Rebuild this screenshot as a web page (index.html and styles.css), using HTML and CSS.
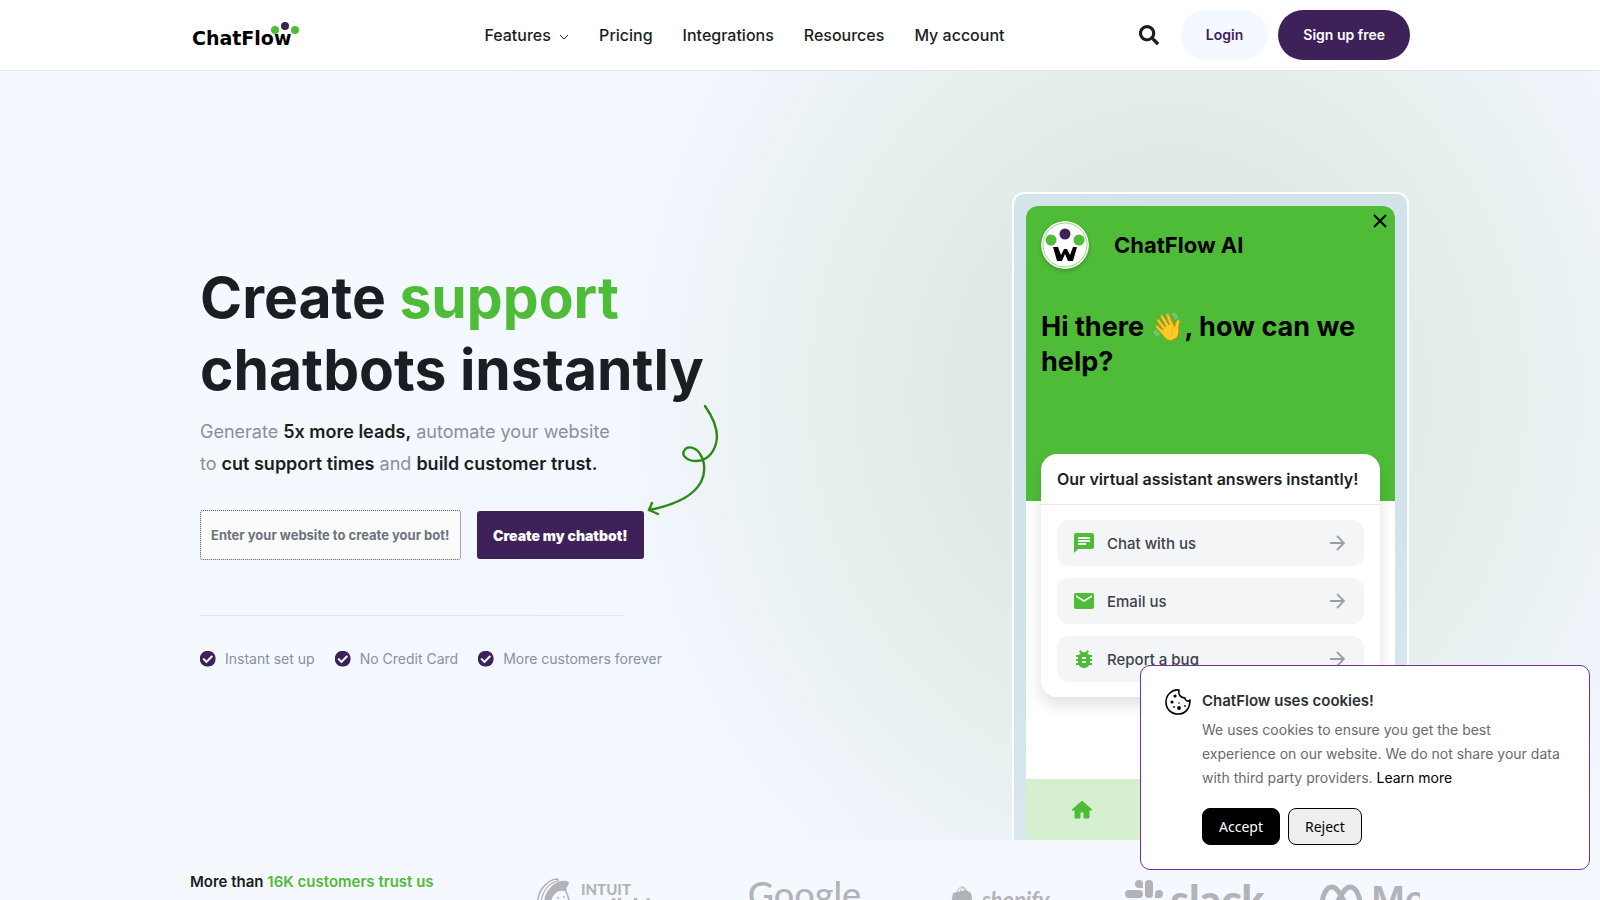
FILE: index.html
```
<!DOCTYPE html>
<html lang="en">
<head>
    <meta charset="UTF-8">
    <meta name="viewport" content="width=device-width, initial-scale=1.0">
    <title>ChatFlow - Create support chatbots instantly</title>
    <link rel="stylesheet" href="styles.css">
</head>
<body>
    <header class="site-header">
        <div class="container header-inner">
            <a href="#" class="logo" aria-label="ChatFlow">
                <svg width="108" height="28" viewBox="0 0 108 28">
                    <text x="0" y="24" class="logo-text">ChatFlow</text>
                    <circle cx="83" cy="9" r="4" fill="#4fbc37"/>
                    <circle cx="93" cy="5" r="4" fill="#3f2159"/>
                    <circle cx="103" cy="9" r="4" fill="#4fbc37"/>
                </svg>
            </a>
            <nav class="main-nav">
                <a href="#">Features
                    <svg width="10" height="6" viewBox="0 0 10 6"><path d="M1 1l4 4 4-4" fill="none" stroke="#1a1e22" stroke-width="1"/></svg>
                </a>
                <a href="#">Pricing</a>
                <a href="#">Integrations</a>
                <a href="#">Resources</a>
                <a href="#">My account</a>
            </nav>
            <div class="header-actions">
                <button type="button" class="search-btn" aria-label="Search">
                    <svg width="20" height="20" viewBox="0 0 512 512"><path fill="#1a1e22" d="M505 442.7L405.3 343c-4.5-4.5-10.6-7-17-7H372c27.6-35.3 44-79.7 44-128C416 93.1 322.9 0 208 0S0 93.1 0 208s93.1 208 208 208c48.3 0 92.7-16.4 128-44v16.3c0 6.4 2.5 12.5 7 17l99.7 99.7c9.4 9.4 24.6 9.4 33.9 0l28.3-28.3c9.4-9.4 9.4-24.6.1-34zM208 336c-70.7 0-128-57.2-128-128 0-70.7 57.2-128 128-128 70.7 0 128 57.2 128 128 0 70.7-57.2 128-128 128z"/></svg>
                </button>
                <a href="#" class="pill pill-light">Login</a>
                <a href="#" class="pill pill-dark">Sign up free</a>
            </div>
        </div>
    </header>

    <main>
        <section class="hero">
            <div class="container hero-inner">
                <div class="hero-copy">
                    <h1>Create <span class="highlight">support</span><br>chatbots instantly</h1>
                    <p class="lead">Generate <strong>5x more leads,</strong> automate your website<br>to <strong>cut support times</strong> and <strong>build customer trust.</strong></p>
                    <form class="bot-form">
                        <input type="text" name="website" placeholder="Enter your website to create your bot!" aria-label="Enter your website to create your bot!">
                        <button type="submit">Create my chatbot!</button>
                        <svg class="arrow" width="76" height="116" viewBox="0 0 76 116" fill="none" stroke="#2c8a14" stroke-width="2.4" stroke-linecap="round" stroke-linejoin="round">
                            <path d="M60 4C67 14 72 24 72 35C71 49 63 59 51 59C43 59 36 54 39 49C42 43 51 45 55 52C61 61 60 72 56 80C48 95 30 103 4 108"/>
                            <path d="M7 101L4 108L13 112"/>
                        </svg>
                    </form>
                    <hr>
                    <ul class="perks">
                        <li><svg width="16" height="16" viewBox="8 8 496 496"><use href="#check"/></svg>Instant set up</li>
                        <li><svg width="16" height="16" viewBox="8 8 496 496"><use href="#check"/></svg>No Credit Card</li>
                        <li><svg width="16" height="16" viewBox="8 8 496 496"><use href="#check"/></svg>More customers forever</li>
                    </ul>
                </div>

                <div class="phone">
                    <div class="widget">
                        <div class="widget-top">
                            <button type="button" class="widget-close" aria-label="Close">
                                <svg width="14" height="14" viewBox="0 0 14 14"><path d="M1 1l12 12M13 1L1 13" stroke="#000" stroke-width="2"/></svg>
                            </button>
                            <div class="widget-brand">
                                <svg class="avatar" width="48" height="48" viewBox="0 0 48 48">
                                    <circle cx="24" cy="24" r="24" fill="#fff"/>
                                    <circle cx="24" cy="24" r="22" fill="none" stroke="#4fbc37" stroke-width="0.6"/>
                                    <circle cx="24" cy="13" r="5.5" fill="#3f2159"/>
                                    <circle cx="10" cy="19" r="5.5" fill="#4fbc37"/>
                                    <circle cx="38" cy="19" r="5.5" fill="#4fbc37"/>
                                    <path d="M12 26H17L20 34L23 28H26L29 34L32 26H36L32 40H27L24 33L21 40H16Z" fill="#000"/>
                                </svg>
                                <span>ChatFlow AI</span>
                            </div>
                            <p class="greeting">Hi there 👋, how can we help?</p>
                        </div>
                        <div class="card">
                            <div class="card-title">Our virtual assistant answers instantly!</div>
                            <div class="card-options">
                                <a href="#" class="option">
                                    <svg width="24" height="24" viewBox="0 0 24 24"><path fill="#4fbc37" d="M20 2H4c-1.1 0-1.99.9-1.99 2L2 22l4-4h14c1.1 0 2-.9 2-2V4c0-1.1-.9-2-2-2zM6 9h12v2H6V9zm8 5H6v-2h8v2zm4-6H6V6h12v2z"/></svg>
                                    <span>Chat with us</span>
                                    <svg width="16" height="16" viewBox="0 0 16 16"><use href="#arrow-right"/></svg>
                                </a>
                                <a href="#" class="option">
                                    <svg width="24" height="24" viewBox="0 0 24 24"><path fill="#4fbc37" d="M20 4H4c-1.1 0-1.99.9-1.99 2L2 18c0 1.1.9 2 2 2h16c1.1 0 2-.9 2-2V6c0-1.1-.9-2-2-2zm0 4l-8 5-8-5V6l8 5 8-5v2z"/></svg>
                                    <span>Email us</span>
                                    <svg width="16" height="16" viewBox="0 0 16 16"><use href="#arrow-right"/></svg>
                                </a>
                                <a href="#" class="option">
                                    <svg width="24" height="24" viewBox="0 0 24 24"><path fill="#4fbc37" d="M20 8h-2.81c-.45-.78-1.07-1.45-1.82-1.96L17 4.41 15.59 3l-2.17 2.17C12.96 5.06 12.49 5 12 5s-.96.06-1.41.17L8.41 3 7 4.41l1.62 1.63C7.88 6.55 7.26 7.22 6.81 8H4v2h2.09c-.05.33-.09.66-.09 1v1H4v2h2v1c0 .34.04.67.09 1H4v2h2.81c1.04 1.79 2.97 3 5.19 3s4.15-1.21 5.19-3H20v-2h-2.09c.05-.33.09-.66.09-1v-1h2v-2h-2v-1c0-.34-.04-.67-.09-1H20V8zm-6 8h-4v-2h4v2zm0-4h-4v-2h4v2z"/></svg>
                                    <span>Report a bug</span>
                                    <svg width="16" height="16" viewBox="0 0 16 16"><use href="#arrow-right"/></svg>
                                </a>
                            </div>
                        </div>
                        <div class="widget-nav">
                            <svg width="24" height="24" viewBox="0 0 24 24"><path fill="#4fbc37" stroke="#4fbc37" stroke-linejoin="round" d="M10 20v-6h4v6h5v-8h3L12 3 2 12h3v8z"/></svg>
                        </div>
                    </div>
                </div>
            </div>
        </section>

        <section class="container trust">
            <h2>More than <span>16K customers trust us</span></h2>
            <div class="brands">
                <div class="brand mailchimp">
                    <svg width="36" height="42" viewBox="0 0 36 42" fill="#b1b3b8">
                        <path d="M4 24C2 24 1 22 1 20C3 10 12 2 19 1C21 1 22 2 21 3" fill="none" stroke="#b1b3b8" stroke-width="1.6"/>
                        <path d="M4 24C6 12 12 5 21 3" fill="none" stroke="#b1b3b8" stroke-width="1.2"/>
                        <path d="M7 24C8 13 16 5 24 3C31 2 35 4 29 10C31 12 29 14 27 13C20 12 16 16 14 24C12 30 7 31 7 24Z"/>
                        <path d="M29 13C31 20 34 25 34 29C32 38 22 42 14 37" fill="none" stroke="#b1b3b8" stroke-width="1.6"/>
                        <circle cx="21" cy="20" r="1"/><circle cx="27" cy="19" r="1"/>
                    </svg>
                    <div><small>INTUIT</small><b>mailchimp</b></div>
                </div>
                <div class="brand google">Google</div>
                <div class="brand shopify">
                    <svg width="24" height="28" viewBox="0 0 24 28">
                        <path d="M3 8L16 5L21 8L24 26L16 28L0 25Z" fill="#b1b3b8"/>
                        <path d="M7 8C8 3 11 1 13 2C15 3 15 6 15 7M10 7C11 3 14 1 16 5" fill="none" stroke="#b1b3b8"/>
                    </svg>
                    <i>shopify</i>
                </div>
                <div class="brand slack">
                    <svg width="38" height="38" viewBox="0 0 38 38" fill="#b1b3b8">
                        <path d="M14 0a4 4 0 0 1 4 4v4h-4a4 4 0 0 1 0-8z"/><rect x="0" y="10" width="18" height="8" rx="4"/>
                        <rect x="20" y="0" width="8" height="18" rx="4"/><path d="M34 10a4 4 0 0 1 0 8h-4v-4a4 4 0 0 1 4-4z"/>
                        <rect x="20" y="20" width="18" height="8" rx="4"/><path d="M24 38a4 4 0 0 1-4-4v-4h4a4 4 0 0 1 0 8z"/>
                        <rect x="10" y="20" width="8" height="18" rx="4"/><path d="M0 24a4 4 0 0 1 4-4h4v4a4 4 0 0 1-8 0z"/>
                    </svg>
                    <b>slack</b>
                </div>
                <div class="brand meta">
                    <svg width="44" height="30" viewBox="0 0 44 30"><path d="M3 22C3 12 7 3 13 3C22 3 26 27 34 27C39 27 41 24 41 20C41 12 37 3 31 3C22 3 18 27 9 27C5 27 3 25 3 22Z" fill="none" stroke="#b1b3b8" stroke-width="5"/></svg>
                    <b>Meta</b>
                </div>
            </div>
        </section>
    </main>

    <aside class="cookies">
        <svg width="26" height="26" viewBox="0 0 26 26">
            <path d="M14 1C7 0 1 6 1 13C1 20 6 25 13 25C20 25 25 20 25 11C23 13 20 12 20 9C16 9 13 6 14 1Z" fill="none" stroke="#000" stroke-width="1.6" stroke-linejoin="round"/>
            <circle cx="10" cy="7" r="1.6"/><circle cx="7" cy="13" r="1.6"/><circle cx="14" cy="19" r="1.9"/>
            <circle cx="14" cy="14" r="0.8"/><circle cx="9" cy="18" r="0.9"/><circle cx="20" cy="17" r="0.9"/>
        </svg>
        <div class="cookies-body">
            <h3>ChatFlow uses cookies!</h3>
            <p>We uses cookies to ensure you get the best experience on our website. We do not share your data with third party providers. <a href="#">Learn more</a></p>
            <div class="cookies-actions">
                <button type="button" class="accept">Accept</button>
                <button type="button" class="reject">Reject</button>
            </div>
        </div>
    </aside>

    <svg class="sprite" width="0" height="0">
        <symbol id="check" viewBox="8 8 496 496"><path fill="#3f2159" d="M504 256c0 136.967-111.033 248-248 248S8 392.967 8 256 119.033 8 256 8s248 111.033 248 248zM227.314 387.314l184-184c6.248-6.248 6.248-16.379 0-22.627l-22.627-22.627c-6.248-6.249-16.379-6.249-22.628 0L216 308.118l-70.059-70.059c-6.248-6.248-16.379-6.248-22.628 0l-22.627 22.627c-6.248 6.248-6.248 16.379 0 22.627l104 104c6.249 6.249 16.379 6.249 22.628.001z"/></symbol>
        <symbol id="arrow-right" viewBox="0 0 16 16"><path d="M1 8h13M8 1l7 7-7 7" fill="none" stroke="#9a9fa5" stroke-width="1.8"/></symbol>
    </svg>
</body>
</html>
```
FILE: styles.css
```
* {
    box-sizing: border-box;
}
body {
    margin: 0;
    font-family: Inter, sans-serif;
    font-size: 16px;
    color: #1a1e22;
    background-color: #f5f8ff;
}
a {
    color: inherit;
    text-decoration: none;
}
button {
    font-family: inherit;
    cursor: pointer;
}
.container {
    max-width: 1220px;
    margin: 0 auto;
}
.sprite {
    display: none;
}

/* header */
.site-header {
    background: white;
    border-bottom: 1px solid #e3e5e8;
}
.header-inner {
    display: flex;
    align-items: center;
    justify-content: space-between;
    height: 70px;
}
.logo {
    display: flex;
    padding-left: 2px;
}
.logo-text {
    font: bold 19px "DejaVu Sans", sans-serif;
}
.main-nav {
    display: flex;
    gap: 30px;
    margin-left: 50px;
    font-weight: 500;
}
.main-nav svg {
    margin-left: 4px;
    vertical-align: middle;
}
.header-actions {
    display: flex;
    align-items: center;
    gap: 10px;
}
.search-btn {
    display: flex;
    padding: 0;
    margin-right: 12px;
    border: none;
    background: none;
}
.pill {
    padding: 0 25px;
    line-height: 50px;
    border-radius: 25px;
    font-size: 14px;
    font-weight: 600;
}
.pill-light {
    background: #f4f8ff;
    color: #3f2159;
}
.pill-dark {
    background: #3f2159;
    color: white;
}

/* hero */
.hero {
    background:
        radial-gradient(ellipse 560px 620px at 73% 42%, #dae7e2 0%, #dfeae7 35%, #e8f0f0 65%, rgba(242, 246, 255, 0) 100%),
        linear-gradient(90deg, #f5f9ff, #f2f6ff 60%, #f2f6ff);
}
.hero-inner {
    display: flex;
    justify-content: space-between;
    align-items: flex-start;
    padding: 121px 1px 0 10px;
}
.hero-copy {
    padding-top: 70px;
}
h1 {
    margin: 0;
    font-size: 57px;
    line-height: 72px;
    font-weight: 700;
}
.highlight {
    color: #4fbc37;
}
.lead {
    margin: 10px 0 0;
    font-size: 18px;
    line-height: 32px;
    color: #87919a;
}
.lead strong {
    font-weight: 600;
    color: #1a1e22;
}
.bot-form {
    position: relative;
    display: flex;
    align-items: center;
    gap: 16px;
    margin-top: 30px;
}
.bot-form input {
    width: 261px;
    height: 50px;
    padding: 0 10px;
    border: 1px dotted #555;
    border-radius: 3px;
    background: #fbfbfb;
    font: 700 13px Inter, sans-serif;
}
.bot-form input::placeholder {
    color: #6c757d;
}
.bot-form button {
    height: 48px;
    padding: 0 16px;
    border: none;
    border-radius: 3px;
    background: #3f2159;
    color: white;
    font-size: 14px;
    font-weight: 900;
}
.arrow {
    position: absolute;
    left: 445px;
    bottom: 42px;
}
.hero-copy hr {
    width: 424px;
    margin: 55px 0 34px;
    border: none;
    border-top: 1px solid #e3e7eb;
}
.perks {
    display: flex;
    gap: 20px;
    margin: 0;
    padding: 0;
    list-style: none;
    font-size: 14px;
    color: #87919a;
}
.perks li {
    display: flex;
    align-items: center;
    gap: 9px;
}

/* chat widget */
.phone {
    width: 397px;
    padding: 12px 12px 0;
    border: 2px solid white;
    border-bottom: none;
    border-radius: 12px 12px 0 0;
    background: linear-gradient(160deg, #d3e4ea, #cfe3e8 50%, #dde8f4);
}
.widget {
    background: white;
    border-radius: 12px 12px 0 0;
    overflow: hidden;
}
.widget-top {
    position: relative;
    padding: 15px 15px 122px;
    background: #4fbc37;
    color: black;
}
.widget-close {
    position: absolute;
    top: 8px;
    right: 8px;
    display: flex;
    padding: 0;
    border: none;
    background: none;
}
.widget-brand {
    display: flex;
    align-items: center;
    gap: 25px;
    font-size: 22px;
    font-weight: 700;
}
.avatar {
    border-radius: 50%;
    box-shadow: 0 2px 4px rgba(0, 0, 0, 0.2);
}
.greeting {
    margin: 40px 0 0;
    font-size: 27px;
    line-height: 35px;
    font-weight: 700;
}
.card {
    position: relative;
    margin: -47px 15px 82px;
    background: white;
    border-radius: 16px;
    box-shadow: 0 8px 16px rgba(0, 0, 0, 0.12);
}
.card-title {
    padding: 0 16px;
    line-height: 50px;
    border-bottom: 1px solid #e8e9eb;
    font-weight: 600;
    white-space: nowrap;
}
.card-options {
    display: flex;
    flex-direction: column;
    gap: 12px;
    padding: 15px 16px;
}
.option {
    display: flex;
    align-items: center;
    gap: 11px;
    height: 46px;
    padding: 0 19px 0 15px;
    border-radius: 12px;
    background: #f3f5f7;
    color: #3c4248;
    font-size: 15px;
    font-weight: 500;
}
.option span {
    flex: 1;
}
.widget-nav {
    padding: 19px 44px 18px;
    background: #d6efd0;
}
.widget-nav svg {
    display: block;
}

/* customers */
.trust {
    display: flex;
    align-items: flex-start;
    padding-top: 32px;
}
.trust h2 {
    flex: 0 0 322px;
    margin: 0;
    font-size: 15px;
    line-height: 20px;
    font-weight: 600;
}
.trust h2 span {
    color: #4fbc37;
}
.brands {
    display: flex;
    flex: 1;
    margin-right: -10px;
    padding-top: 2px;
    overflow: hidden;
    color: #b1b3b8;
}
.brand {
    display: flex;
    flex: 0 0 195px;
    align-items: center;
    justify-content: center;
    gap: 8px;
    height: 50px;
}
.mailchimp small {
    display: block;
    font: 900 15px/16px Lato, sans-serif;
}
.mailchimp b {
    display: block;
    font: 900 22px/20px Lato, sans-serif;
}
.google {
    font: 500 36px/40px Lato, sans-serif;
    align-items: flex-start;
}
.shopify i {
    font: italic 700 22px Lato, sans-serif;
}
.slack b {
    font: 900 42px/42px Lato, sans-serif;
}
.meta b {
    font: 600 36px/36px Inter, sans-serif;
}

/* cookie notice */
.cookies {
    position: fixed;
    right: 10px;
    bottom: 30px;
    display: flex;
    gap: 11px;
    width: 450px;
    padding: 23px 24px 24px;
    border: 1px solid #7030a0;
    border-radius: 10px;
    background: white;
}
.cookies > svg {
    flex: none;
}
.cookies h3 {
    margin: 0;
    font-size: 15px;
    line-height: 24px;
    font-weight: 600;
    color: #2b2f33;
}
.cookies p {
    margin: 5px 0 18px;
    font-size: 14px;
    line-height: 24px;
    color: #6a6a6a;
}
.cookies p a {
    color: black;
}
.cookies-actions {
    display: flex;
    gap: 8px;
}
.cookies-actions button {
    height: 37px;
    padding: 0 16px;
    border: 1px solid black;
    border-radius: 8px;
    font: 14px "Noto Sans", sans-serif;
}
.accept {
    background: black;
    color: white;
}
.reject {
    background: #efefef;
    color: black;
}
```
